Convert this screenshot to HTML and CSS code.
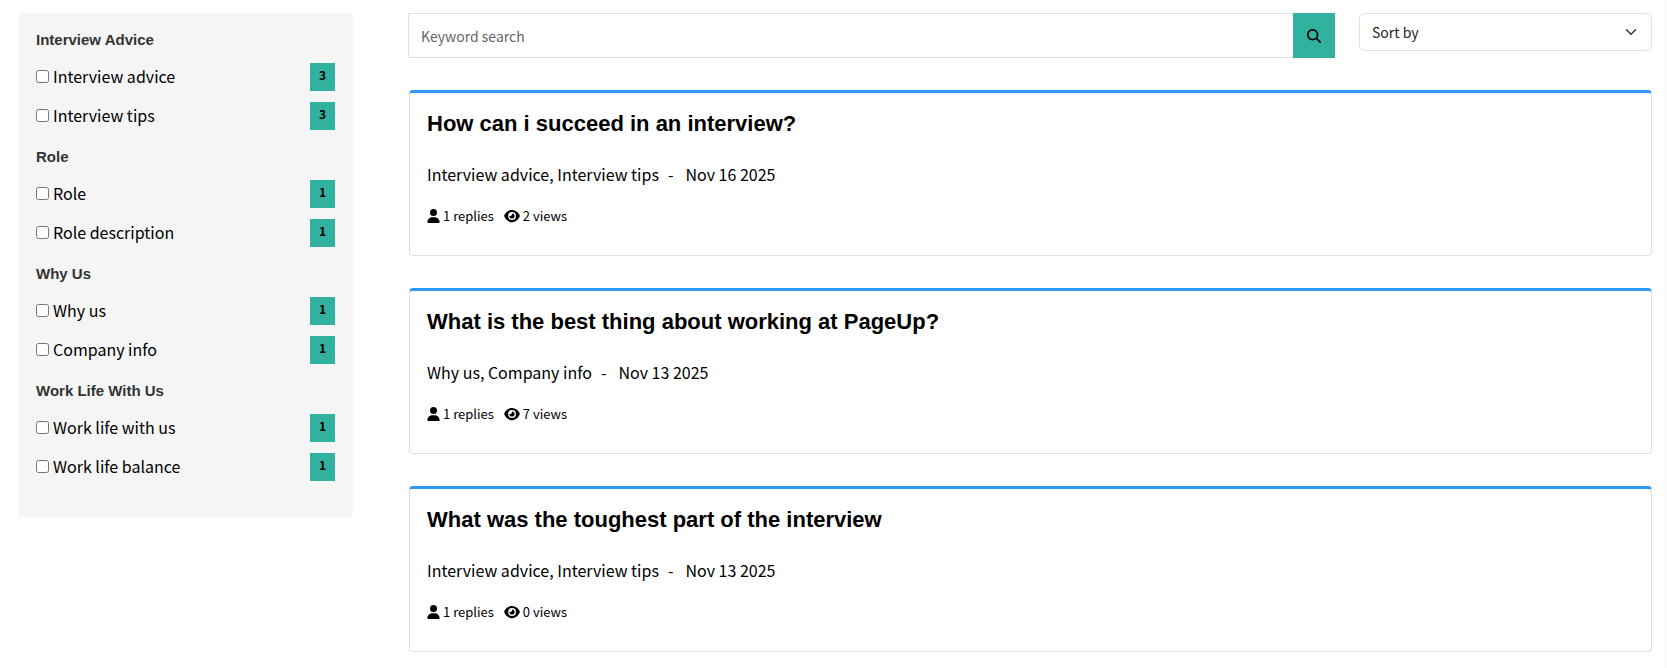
FILE: index.html
```html
<!DOCTYPE html>
<html lang="en">
<head>
  <meta charset="UTF-8">
  <meta name="viewport" content="width=device-width, initial-scale=1">
  <title>Interview questions</title>
  <link rel="stylesheet" href="styles.css">
</head>
<body>
  <!-- shared icons -->
  <svg class="sprite" aria-hidden="true">
    <symbol id="icon-user" viewBox="0 0 448 512"><path d="M224 256a128 128 0 1 0 0-256a128 128 0 1 0 0 256zm-45.700 48C79.800 304 0 383.800 0 482.300C0 498.700 13.300 512 29.700 512H418.300c16.400 0 29.700-13.300 29.700-29.700C448 383.800 368.200 304 269.700 304H178.300z"/></symbol>
    <symbol id="icon-eye" viewBox="0 0 576 512"><path d="M288 32c-80.800 0-145.500 36.800-192.600 80.600C48.600 156 17.300 208 2.500 243.700c-3.300 7.900-3.300 16.700 0 24.600C17.300 304 48.600 356 95.400 399.400C142.500 443.200 207.200 480 288 480s145.500-36.800 192.600-80.600c46.800-43.500 78.100-95.400 93-131.100c3.300-7.900 3.300-16.700 0-24.600c-14.900-35.700-46.200-87.700-93-131.100C433.500 68.800 368.800 32 288 32zM144 256a144 144 0 1 1 288 0a144 144 0 1 1-288 0zm144-64c0 35.300-28.700 64-64 64c-7.100 0-13.900-1.200-20.300-3.300c-5.500-1.800-11.900 1.600-11.700 7.400c.3 6.900 1.300 13.800 3.200 20.700c13.700 51.200 66.400 81.600 117.600 67.900s81.600-66.400 67.900-117.600c-11.100-41.500-47.800-69.400-88.600-71.100c-5.800-.2-9.200 6.100-7.400 11.700c2.100 6.400 3.300 13.200 3.300 20.300z"/></symbol>
    <symbol id="icon-search" viewBox="0 0 512 512"><path d="M416 208c0 45.900-14.900 88.300-40 122.700L502.600 457.400c12.500 12.500 12.500 32.800 0 45.300s-32.800 12.500-45.300 0L330.700 376c-34.400 25.200-76.800 40-122.700 40C93.100 416 0 322.900 0 208S93.100 0 208 0S416 93.100 416 208zM208 352a144 144 0 1 0 0-288a144 144 0 1 0 0 288z"/></symbol>
    <symbol id="icon-chevron" viewBox="0 0 16 16"><path d="M2 5l6 6 6-6" fill="none" stroke="#343a40" stroke-width="2" stroke-linecap="round" stroke-linejoin="round"/></symbol>
  </svg>

  <div class="page">
    <aside class="filters">
      <section>
        <h2>Interview Advice</h2>
        <div class="filter"><input type="checkbox" id="interview-advice"><label for="interview-advice">Interview advice</label><span class="count">3</span></div>
        <div class="filter"><input type="checkbox" id="interview-tips"><label for="interview-tips">Interview tips</label><span class="count">3</span></div>
      </section>
      <section>
        <h2>Role</h2>
        <div class="filter"><input type="checkbox" id="role"><label for="role">Role</label><span class="count">1</span></div>
        <div class="filter"><input type="checkbox" id="role-description"><label for="role-description">Role description</label><span class="count">1</span></div>
      </section>
      <section>
        <h2>Why Us</h2>
        <div class="filter"><input type="checkbox" id="why-us"><label for="why-us">Why us</label><span class="count">1</span></div>
        <div class="filter"><input type="checkbox" id="company-info"><label for="company-info">Company info</label><span class="count">1</span></div>
      </section>
      <section>
        <h2>Work Life With Us</h2>
        <div class="filter"><input type="checkbox" id="work-life"><label for="work-life">Work life with us</label><span class="count">1</span></div>
        <div class="filter"><input type="checkbox" id="work-balance"><label for="work-balance">Work life balance</label><span class="count">1</span></div>
      </section>
    </aside>

    <main>
      <div class="toolbar">
        <form class="search">
          <input type="text" placeholder="Keyword search" aria-label="Keyword search">
          <button type="button" aria-label="Search"><svg><use href="#icon-search"/></svg></button>
        </form>
        <div class="sort">
          <select aria-label="Sort by">
            <option>Sort by</option>
            <option>Newest</option>
            <option>Most viewed</option>
          </select>
          <svg><use href="#icon-chevron"/></svg>
        </div>
      </div>

      <div class="questions">
        <article class="card">
          <h3><a href="#">How can i succeed in an interview?</a></h3>
          <p class="meta"><span>Interview advice, Interview tips</span><span class="dash">-</span><span>Nov 16 2025</span></p>
          <p class="stats">
            <span><svg class="user"><use href="#icon-user"/></svg>1 replies</span>
            <span><svg class="eye"><use href="#icon-eye"/></svg>2 views</span>
          </p>
        </article>
        <article class="card">
          <h3><a href="#">What is the best thing about working at PageUp?</a></h3>
          <p class="meta"><span>Why us, Company info</span><span class="dash">-</span><span>Nov 13 2025</span></p>
          <p class="stats">
            <span><svg class="user"><use href="#icon-user"/></svg>1 replies</span>
            <span><svg class="eye"><use href="#icon-eye"/></svg>7 views</span>
          </p>
        </article>
        <article class="card">
          <h3><a href="#">What was the toughest part of the interview</a></h3>
          <p class="meta"><span>Interview advice, Interview tips</span><span class="dash">-</span><span>Nov 13 2025</span></p>
          <p class="stats">
            <span><svg class="user"><use href="#icon-user"/></svg>1 replies</span>
            <span><svg class="eye"><use href="#icon-eye"/></svg>0 views</span>
          </p>
        </article>
      </div>
    </main>
  </div>
</body>
</html>
```

FILE: styles.css
```css
* {
  box-sizing: border-box;
}

body {
  margin: 0;
  min-height: 100vh;
  border-right: 3px solid #fafafa;
  font-family: "Noto Sans CJK JP", sans-serif;
  font-size: 16px;
  line-height: 24px;
  color: #000;
  background: #fff;
}

h2, h3, p {
  margin: 0;
}

.sprite {
  display: none;
}

.page {
  display: grid;
  grid-template-columns: 335px 1fr;
  gap: 55px;
  align-items: start;
  padding: 13px 12px 16px 18px;
}

/* sidebar */
.filters {
  padding: 11px 18px 25px;
  background: #f5f5f5;
  border-radius: 4px;
}

.filters h2 {
  height: 39px;
  padding-top: 4px;
  font-family: "Liberation Sans", Arial, sans-serif;
  font-size: 15px;
  line-height: 24px;
  color: #333;
}

.filter {
  display: flex;
  align-items: flex-start;
  gap: 4px;
  height: 28px;
  margin-bottom: 11px;
}

.filter input {
  width: 13px;
  height: 13px;
  margin: 7px 0 0;
}

.filter label {
  line-height: 27px;
}

.count {
  width: 25px;
  height: 28px;
  margin-left: auto;
  font-size: 12px;
  line-height: 23px;
  font-weight: bold;
  text-align: center;
  background: #30b29e;
}

/* search and sort */
.toolbar {
  display: flex;
  align-items: flex-start;
  gap: 24px;
  margin-bottom: 32px;
}

.search {
  display: flex;
  flex: 1;
  height: 45px;
}

.search input {
  flex: 1;
  min-width: 0;
  padding: 0 12px;
  border: 1px solid #dee0e2;
  border-right: 0;
  font-family: inherit;
  font-size: 14px;
  color: #212529;
}

.search input::placeholder {
  color: #666;
  opacity: 1;
}

.search button {
  display: flex;
  align-items: center;
  justify-content: center;
  width: 42px;
  padding: 0;
  border: 0;
  background: #30b29e;
  cursor: pointer;
}

.search button svg {
  width: 14px;
  height: 14px;
}

.sort {
  position: relative;
  width: 293px;
}

.sort select {
  width: 100%;
  height: 38px;
  padding: 0 36px 0 12px;
  border: 1px solid #dee2e6;
  border-radius: 6px;
  appearance: none;
  font-family: inherit;
  font-size: 14px;
  color: #212529;
  background: #fff;
}

.sort svg {
  position: absolute;
  top: 13px;
  right: 15px;
  width: 12px;
  height: 12px;
  pointer-events: none;
}

/* questions */
.questions {
  display: grid;
  gap: 32px;
  margin-left: 1px;
}

.card {
  padding: 18px 17px 27px;
  border: 1px solid #dfdfdf;
  border-top: 3px solid #2e97fb;
  border-radius: 4px;
}

.card h3 {
  font-family: "Liberation Sans", Arial, sans-serif;
  font-size: 22px;
  line-height: 26px;
}

.card a {
  color: inherit;
  text-decoration: none;
}

.meta {
  margin-top: 25px;
}

.dash {
  margin: 0 12px 0 9px;
}

.stats {
  display: flex;
  gap: 10px;
  margin-top: 18px;
  font-size: 13px;
}

.stats span {
  display: flex;
  align-items: center;
  gap: 3px;
}

.stats svg {
  height: 14px;
}

.user {
  width: 13px;
}

.eye {
  width: 16px;
}

@media (max-width: 900px) {
  .page {
    grid-template-columns: 1fr;
    gap: 24px;
  }

  .toolbar {
    flex-wrap: wrap;
  }
}
```
